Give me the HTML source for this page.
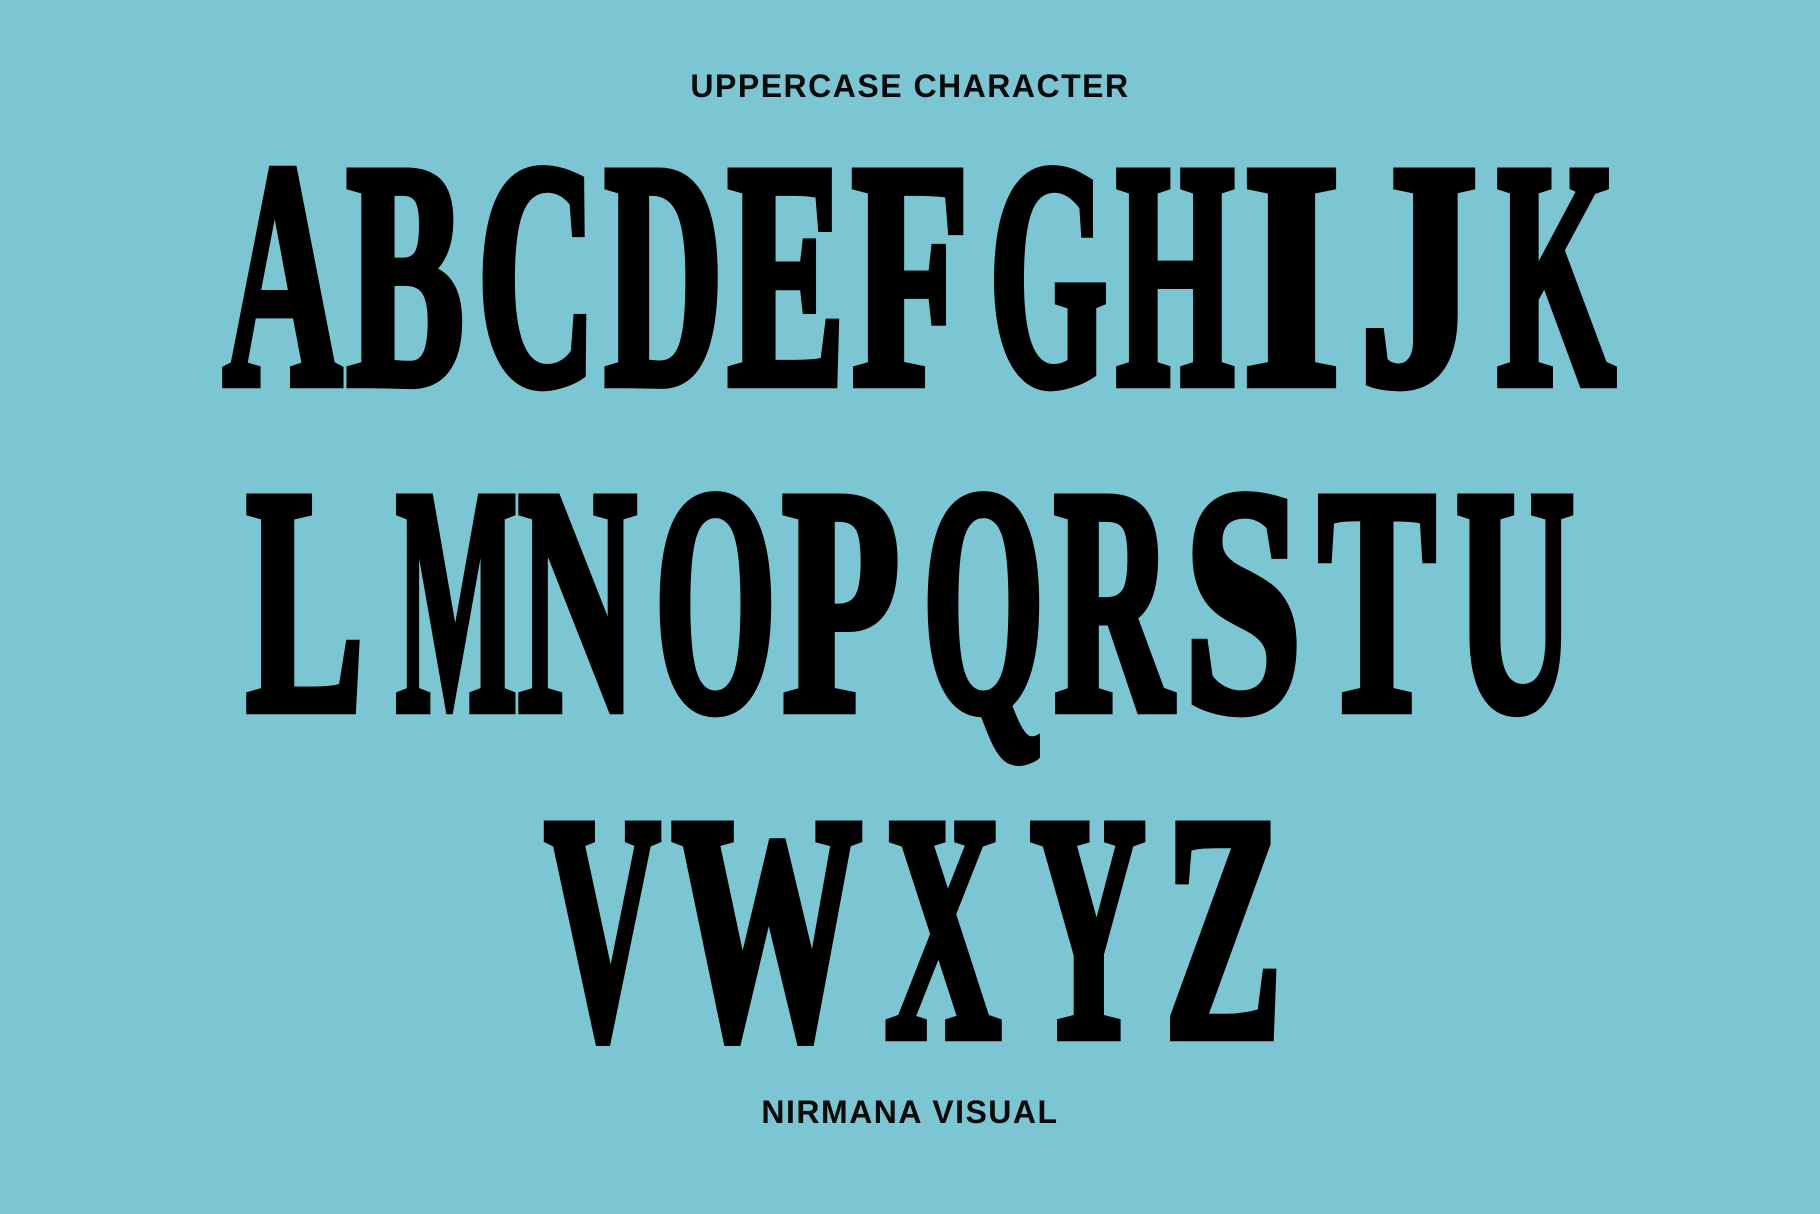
<!DOCTYPE html>
<html><head><meta charset="utf-8"><style>
html,body{margin:0;padding:0}
body{width:1820px;height:1214px;background:#7BC6D2;position:relative;overflow:hidden;font-family:"Liberation Sans",sans-serif}
.lbl{position:absolute;left:0;width:1820px;text-align:center;font-weight:bold;font-size:32px;letter-spacing:1.5px;color:#0a0a0a;line-height:1}
.row{position:absolute;height:200px}
.row span{position:absolute;top:0;display:block;text-align:center;font-family:"Liberation Serif",serif;font-weight:bold;font-size:200px;line-height:200px;color:#000;transform-origin:50% 35px;-webkit-text-stroke:7px #000}
</style></head><body>
<div class="lbl" style="top:70px">UPPERCASE CHARACTER</div>
<div class="row" style="left:212px;top:138px">
<span style="left:0;width:127px;transform:scale(.82,1.6)">A</span>
<span style="left:127px;width:127px;transform:scale(.88,1.6)">B</span>
<span style="left:254px;width:127px;transform:scale(.82,1.6)">C</span>
<span style="left:381px;width:127px;transform:scale(.82,1.6)">D</span>
<span style="left:508px;width:127px;transform:scale(.88,1.6)">E</span>
<span style="left:635px;width:127px;transform:scale(.96,1.6)">F</span>
<span style="left:762px;width:127px;transform:scale(.76,1.6)">G</span>
<span style="left:889px;width:127px;transform:scale(.76,1.6)">H</span>
<span style="left:1016px;width:127px;transform:scale(1.25,1.6)">I</span>
<span style="left:1143px;width:127px;transform:scale(1.18,1.6)">J</span>
<span style="left:1270px;width:127px;transform:scale(.76,1.6)">K</span>
</div>
<div class="row" style="left:238px;top:464px">
<span style="left:0;width:134px;transform:scale(.88,1.6)">L</span>
<span style="left:134px;width:134px;transform:scale(.64,1.6)">M</span>
<span style="left:268px;width:134px;transform:scale(.82,1.6)">N</span>
<span style="left:402px;width:134px;transform:scale(.78,1.6)">O</span>
<span style="left:536px;width:134px;transform:scale(.96,1.6)">P</span>
<span style="left:670px;width:134px;transform:scale(.78,1.6)">Q</span>
<span style="left:804px;width:134px;transform:scale(.82,1.6)">R</span>
<span style="left:938px;width:134px;transform:scale(1.06,1.6)">S</span>
<span style="left:1072px;width:134px;transform:scale(.88,1.6)">T</span>
<span style="left:1206px;width:134px;transform:scale(.82,1.6)">U</span>
</div>
<div class="row" style="left:532px;top:791px">
<span style="left:0;width:128px;transform:scale(.8,1.6)">V</span>
<span style="left:135px;width:198px;transform:scale(.95,1.6)">W</span>
<span style="left:340px;width:133px;transform:scale(.8,1.6)">X</span>
<span style="left:485px;width:130px;transform:scale(.8,1.6)">Y</span>
<span style="left:625px;width:128px;transform:scale(.88,1.6)">Z</span>
</div>
<div class="lbl" style="top:1096px">NIRMANA VISUAL</div>
</body></html>
